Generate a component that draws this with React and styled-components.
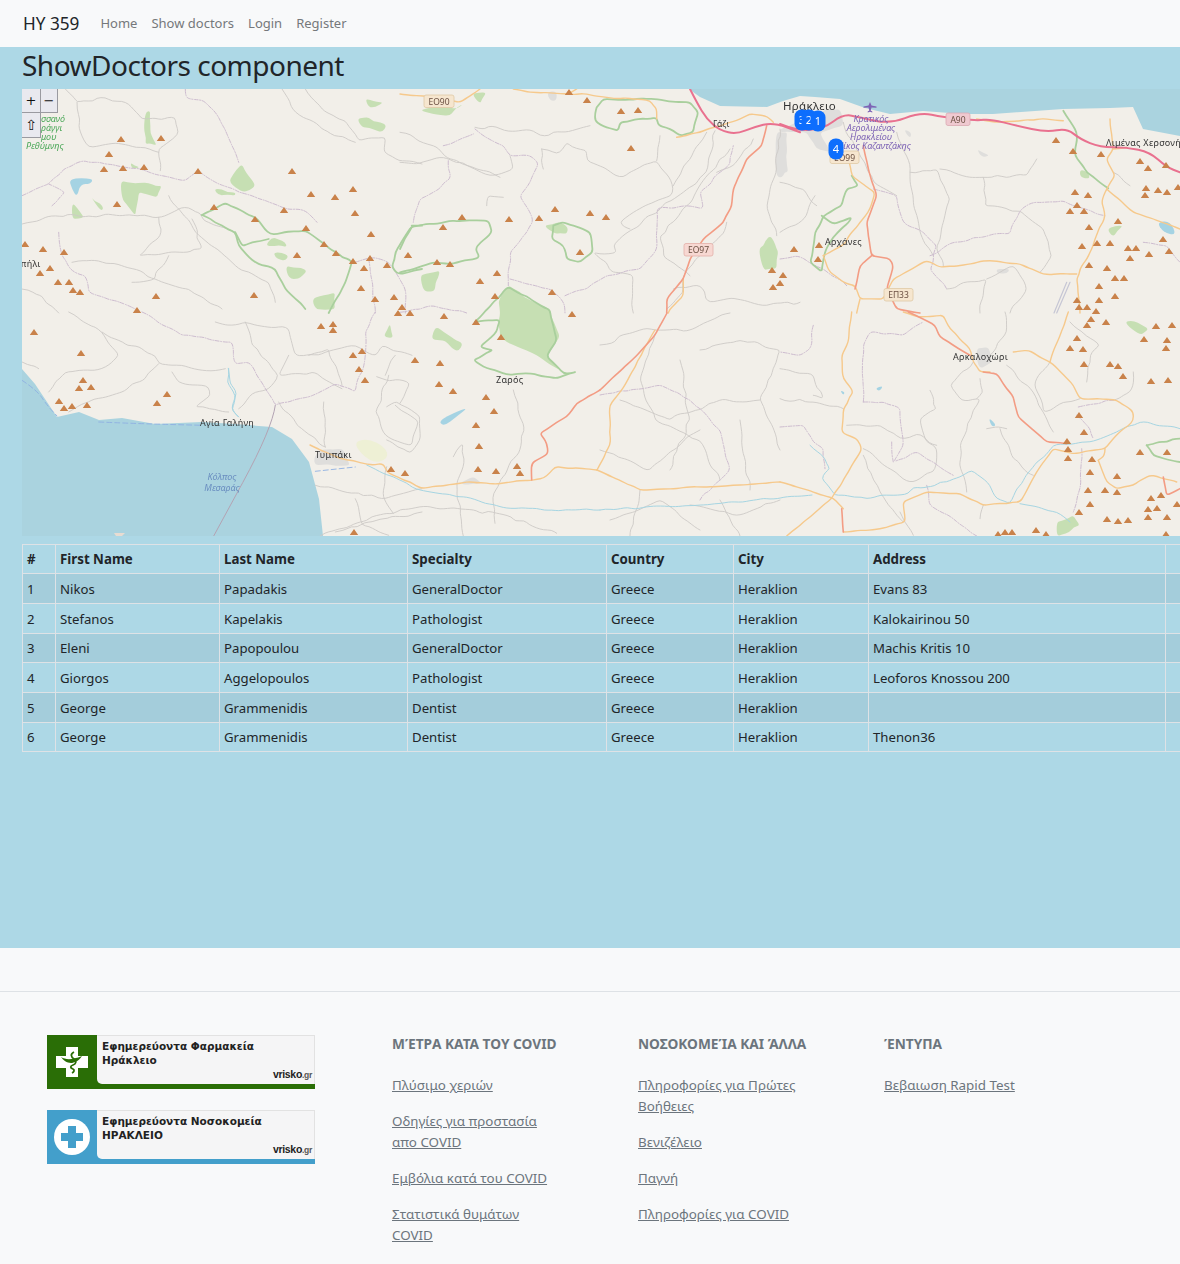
import React from "react";
import styled, { createGlobalStyle } from "styled-components";

const GlobalStyle = createGlobalStyle`
  html, body {
    margin: 0;
    padding: 0;
    overflow-x: hidden;
    background: #f8f9fa;
    font-family: "Noto Sans", "Open Sans", sans-serif;
    font-size: 14px;
    color: #212529;
  }
`;

// Navbar
const Navbar = styled.nav`
  display: flex;
  align-items: center;
  height: 47px;
  padding-left: 23px;
  background: #f8f9fa;
`;

const Brand = styled.a`
  font-size: 17.2px;
  color: #212529;
  margin: -1px 21px 0 0;
`;

const NavLinks = styled.div`
  display: flex;
  gap: 14px;
`;

const NavLink = styled.a`
  margin-top: -2px;
  font-size: 13px;
  color: #75787b;
`;

// Main blue area
const Main = styled.main`
  height: 901px;
  padding: 0 0 0 22px;
  background: #add8e6;
  overflow: hidden;
`;

const Title = styled.h1`
  margin: 0;
  height: 42px;
  font-size: 28px;
  font-weight: 400;
  line-height: 37px;
  letter-spacing: -0.5px;
`;

const MapBox = styled.div`
  position: relative;
  height: 447px;
  margin-bottom: 8px;
  overflow: hidden;
`;

const MapSvg = styled.svg`
  display: block;
  width: 1158px;
  height: 447px;
  filter: blur(0.35px);
`;

const ControlRow = styled.div`
  position: absolute;
  top: 0;
  left: 0;
  display: grid;
  grid-template-columns: 19px 17px;
  grid-template-rows: 24px 25px;
`;

const MapButton = styled.button`
  padding: 0;
  border: 1px solid #9a9aa0;
  border-width: 0 1px 1px 0;
  background: #e9e9ef;
  color: #111;
  font-family: "DejaVu Sans", sans-serif;
  font-size: ${(p) => p.$size || 13}px;
  line-height: 1;
`;

// Table
const Table = styled.table`
  width: 1203px;
  table-layout: fixed;
  border-collapse: collapse;
  color: #212529;
`;

const HeadCell = styled.th`
  height: 29px;
  padding: 0 4px;
  box-sizing: border-box;
  border: 1px solid #dee2e6;
  font-size: 13.3px;
  font-weight: 700;
  text-align: left;
`;

const Row = styled.tr`
  background: ${(p) => (p.$striped ? "#a4cddb" : "transparent")};
`;

const Cell = styled.td`
  height: ${(p) => p.$height}px;
  padding: 0 4px;
  box-sizing: border-box;
  border: 1px solid #dee2e6;
  font-size: 13.2px;
`;

// Footer
const Footer = styled.footer`
  background: #f8f9fa;
  padding-top: 43px;
`;

const FooterBody = styled.div`
  display: grid;
  grid-template-columns: 345px 246px 246px 246px;
  height: 230px;
  padding: 43px 0 0 47px;
  border-top: 1px solid #dee2e6;
  overflow: hidden;
`;

const BannerStack = styled.div`
  display: flex;
  flex-direction: column;
  gap: 21px;
`;

const Banner = styled.div`
  display: flex;
  width: 268px;
  height: 54px;
  background: ${(p) => p.$color};
`;

const BannerIcon = styled.div`
  display: flex;
  align-items: center;
  justify-content: center;
  width: 50px;
  flex: none;
`;

const BannerPanel = styled.div`
  position: relative;
  flex: 1;
  height: 49px;
  box-sizing: border-box;
  padding: 3px 0 0 5px;
  background: #f5f5f6;
  border-top: 1px solid #e2e2e2;
  border-right: 1px solid #e2e2e2;
  border-bottom-left-radius: 5px;
  font-family: "DejaVu Sans", sans-serif;
  font-size: 10.5px;
  font-weight: 700;
  line-height: 14px;
  color: #222;
`;

const Vrisko = styled.span`
  position: absolute;
  right: 2px;
  bottom: 2px;
  font-family: "Liberation Sans", sans-serif;
  font-size: 10.5px;
  font-weight: 700;
  letter-spacing: -0.3px;

  small {
    font-size: 8.5px;
    color: #555;
  }
`;

const LinkColumn = styled.div`
  display: flex;
  flex-direction: column;
  width: 168px;
`;

const ColumnTitle = styled.h5`
  margin: -2px 0 21px;
  font-size: 13.7px;
  font-weight: 700;
  line-height: 21px;
  color: #6c757d;
  white-space: nowrap;
`;

const FooterLink = styled.a`
  display: block;
  margin-bottom: 15px;
  font-size: 13.4px;
  line-height: 21px;
  color: #6c757d;
  text-decoration: underline;
`;

// zoomed crop coords -> page coords
const tile = (ox, oy) => (pts) =>
  pts
    .split(" ")
    .map((p) => {
      const [x, y] = p.split(",").map(Number);
      return `${(ox + x / 3).toFixed(1)},${(oy + y / 3).toFixed(1)}`;
    })
    .join(" ");

const A = tile(22, 89);
const B = tile(400, 89);
const C = tile(780, 89);
const D = tile(22, 312);
const E = tile(780, 312);
const F = tile(180, 280);

// round the corners of a point list so roads and woods don't look like polygons
const smooth = (pts, closed) => {
  const p = pts.split(" ").map((s) => s.split(",").map(Number));
  const mid = (a, b) => [(a[0] + b[0]) / 2, (a[1] + b[1]) / 2];
  if (closed) {
    const start = mid(p[p.length - 1], p[0]);
    let d = `M${start[0]} ${start[1]}`;
    p.forEach((q, i) => {
      const m = mid(q, p[(i + 1) % p.length]);
      d += `Q${q[0]} ${q[1]} ${m[0]} ${m[1]}`;
    });
    return d + "Z";
  }
  let d = `M${p[0][0]} ${p[0][1]}`;
  for (let i = 1; i < p.length - 1; i++) {
    const m = mid(p[i], p[i + 1]);
    d += `Q${p[i][0]} ${p[i][1]} ${m[0]} ${m[1]}`;
  }
  const last = p[p.length - 1];
  return d + `L${last[0]} ${last[1]}`;
};

// small fixed wobble, real country roads are never this clean
const wiggle = (pts, amount) => {
  const p = pts.split(" ").map((s) => s.split(",").map(Number));
  const out = [];
  p.forEach((q, i) => {
    out.push(q.join(","));
    const next = p[i + 1];
    if (!next) return;
    const steps = Math.max(1, Math.round(Math.hypot(next[0] - q[0], next[1] - q[1]) / 7));
    for (let s = 1; s < steps; s++) {
      const t = s / steps;
      const n = Math.sin((q[0] + s) * 12.9898 + (q[1] + s) * 78.233) * 43758.5453;
      const a = (n - Math.floor(n) - 0.5) * 2 * amount;
      const b = (n * 7 - Math.floor(n * 7) - 0.5) * 2 * amount;
      out.push(`${(q[0] + (next[0] - q[0]) * t + a).toFixed(1)},${(q[1] + (next[1] - q[1]) * t + b).toFixed(1)}`);
    }
  });
  return out.join(" ");
};

const greyLines = [
  A("130,0 165,40 250,25 320,45 360,90 460,85 470,130 410,180 415,245"),
  A("165,40 170,110 200,175 260,165 300,165 370,175 410,190"),
  A("850,0 900,60 970,95 1010,155 1090,145 1085,190 1130,215 1200,225"),
  A("780,0 820,70 900,120 1000,160"),
  A("0,405 100,380 200,380 300,380 410,385 500,355 560,400 640,430"),
  A("410,385 415,440 350,500 440,490 540,480 510,390"),
  A("440,320 460,350 520,430 640,530 700,560 740,580 760,640"),
  A("150,520 230,515 300,530 400,570 500,600 600,660"),
  A("440,500 410,540 400,570 330,580"),
  A("0,600 60,620 110,672"),
  B("0,130 100,170 150,210 230,240 300,265"),
  B("0,220 50,225 130,205 225,240 270,260 340,240 330,200"),
  B("225,115 400,125 420,140 550,115 570,110"),
  B("425,180 470,195 500,160 560,185 560,215 670,265 720,235 770,215 800,255 820,300 800,325 700,370 660,400 690,420"),
  B("430,240 425,180"),
  B("780,140 770,215"),
  B("920,130 880,190 850,230 820,290"),
  B("945,125 920,250 850,310 700,420 640,470 650,490 580,490 620,520 640,550 700,560 700,672"),
  B("990,180 930,250 820,400 780,440 790,500 870,560"),
  B("1060,150 1000,230 950,250"),
  B("1140,120 1130,240 1110,300 1100,350 1130,440"),
  B("820,600 900,590 930,640 1010,630 1100,650 1200,640"),
  B("980,400 975,430 900,500 850,560 850,610 800,660"),
  B("260,350 260,320 310,325"),
  C("390,250 470,240 510,330 490,400 470,470 490,530"),
  C("350,130 380,200 390,250 400,340 420,430 460,500"),
  C("610,265 615,350 720,365 790,420 815,500 780,550"),
  C("480,240 570,265 610,265 740,260 770,210"),
  C("0,280 70,300 110,350"),
  C("0,430 80,380 105,320"),
  C("1000,250 1050,290"),
  C("620,570 700,530 740,600 690,672"),
  C("500,600 550,580 620,570 600,672"),
  C("190,100 280,280 350,320"),
  E("580,150 510,220 545,265 600,260 540,400 545,480 560,540"),
  E("600,200 610,240 590,260"),
  E("630,130 680,60 675,0"),
  E("680,160 760,240 790,300 820,360"),
  E("810,150 765,210 790,300 850,270 900,260"),
  E("450,235 470,290 420,320 440,390 470,410 460,480 390,510 300,450 250,410"),
  E("200,340 300,340 360,380 410,365 470,400"),
  E("660,350 700,440 760,490"),
  E("0,260 100,270 190,290"),
  E("0,170 100,190 130,260 100,250"),
  E("620,350 680,350"),
  E("360,600 400,670"),
  E("250,430 300,540 370,630"),
  E("600,620 610,580"),
  E("870,30 960,100 930,130 920,210"),
  E("1060,180 1050,240 1000,265"),
  D("140,0 240,60 290,130 240,170 170,175 130,180 80,240"),
  D("240,60 400,130 410,155 540,175 610,170"),
  D("410,155 370,200 300,240 200,270 140,300"),
  D("0,150 50,170"),
  D("450,180 470,210 560,225 565,250 520,285 620,300"),
  D("670,30 690,100 770,190 740,230 700,240 650,290"),
  D("580,30 630,40 670,30 800,50 820,130 890,130 1000,100 1060,130 1080,100 1170,130"),
  D("800,130 770,190 870,180 960,230"),
  D("860,130 920,110 960,220"),
  D("770,270 825,340 910,405"),
  D("905,270 910,405"),
  D("1090,190 1120,130"),
  D("1100,190 1060,300 1090,370 1170,400 1190,330 1120,280"),
  D("880,520 1090,560 1200,530"),
  D("1000,560 1020,640 1100,670"),
  D("940,660 1050,630 1200,600"),
  F("820,530 850,490 850,560 830,610 840,700 850,768"),
  F("1000,330 1030,430 1020,510 940,640 945,730"),
  F("620,380 650,365 720,410 720,480 690,520 620,480"),
  F("590,290 690,310 660,370"),
  F("420,768 620,700 720,680 950,700 1130,760"),
  F("620,560 610,650 640,700"),
  // middle south part, read off the full screenshot
  "655,335 640,380 655,420 700,440 720,480",
  "700,350 740,340 780,350 760,400 780,450",
  "620,400 670,420 720,400 760,400",
  "600,450 650,470 700,430",
  "610,520 660,500 700,530",
  "720,500 740,536",
  "640,490 630,536",
  "680,360 690,420 670,470",
  "740,420 750,490",
  "600,345 640,330 690,330 730,313",
  "780,500 740,515 690,505",
];

const adminLines = [
  A("0,320 80,285 125,240 185,215 250,225 310,235 370,245 420,260 490,275 530,245 590,285 690,320 780,355 850,365 885,400"),
  A("490,0 490,25 545,35 590,85 640,190 650,220"),
  A("1000,520 1050,505 1100,520 1150,600 1150,672"),
  A("1040,510 1060,672"),
  A("90,350 130,310 80,285"),
  A("110,430 120,500 150,545 190,560 200,610 280,635 340,660"),
  B("225,120 250,140 310,170 330,200 390,200 415,225 390,280 360,320 390,370 400,395 380,430 330,490 325,590"),
  B("130,170 220,135"),
  B("145,215 150,270 100,310 60,330 40,400"),
  B("330,570 450,600 490,640 495,672"),
  B("495,620 560,600 620,560 720,540 770,480 770,360 860,350 910,360 900,310 990,225 1000,170"),
  B("0,670 100,650 200,672"),
  C("450,500 520,460 640,435 690,435 720,365 760,340 850,335 950,375 975,380"),
  C("280,300 350,320 370,400 430,430 470,470 450,540 500,600"),
  C("0,510 50,500 130,540 200,590"),
  C("1090,460 1160,470 1200,520"),
  E("250,270 250,100 270,60 370,70 430,30"),
  E("250,270 310,270 360,290 370,400 340,450 410,420 460,450 520,490"),
  E("335,390 340,450"),
  E("0,345 70,340 100,390 130,410 135,470"),
  E("100,40 90,110 60,130 0,120"),
  E("895,285 1000,265"),
  E("890,310 930,350 940,380"),
  E("905,410 900,530 880,600"),
  E("440,520 450,580 520,620 590,672"),
  D("360,0 480,70 630,90 640,155 680,150 730,230 760,280 860,255 940,215 1000,240 1030,130 1030,60 1060,0"),
  "600,395 660,385 690,400 720,430 730,470 700,500",
];

const parkLines = [
  A("540,378 610,342 700,385 745,435 850,425 900,460 960,505 990,517 960,600 920,672"),
  A("540,378 640,430 650,470 700,520 760,540 790,600 850,660"),
  A("640,430 660,470 690,460 740,450"),
  A("1200,410 1170,410 1120,490 1110,530 1130,555 1200,540"),
  B("590,55 610,30 740,30 870,40 895,70 880,130 840,140 820,125 775,110 770,85 660,100 655,125 620,115 585,95 590,55"),
  B("35,410 100,405 150,395 265,395 275,430 225,480 240,505 150,525 100,520 20,545 0,550"),
  B("0,480 35,415"),
  B("460,410 490,400 570,430 578,490 540,520 500,510 490,470 455,450 460,410"),
  F("885,125 985,20 1110,90 1130,180 1100,230 1150,280 1190,275 1130,295 1040,280 990,285 920,265 880,240 940,210 900,200 950,155 960,120 890,125"),
  C("215,260 235,290 200,300 185,350 130,380 105,430 90,520 125,548 135,490 150,460 215,385 160,405 125,380"),
  C("850,65 890,130 885,200 920,250 985,298"),
  E("1100,400 1120,430 1200,450"),
  E("1100,400 1200,380"),
];

const forests = [
  A("295,275 420,290 405,325 350,310 340,380 300,330"),
  A("575,300 640,310 640,320 590,320"),
  A("620,280 660,225 700,290 660,310"),
  A("1005,90 1040,85 1095,110 1080,130 1020,115"),
  A("1030,30 1085,40 1060,55 1040,55"),
  A("755,490 800,500 790,515 760,505"),
  A("790,530 855,545 830,570 800,570"),
  A("870,630 940,610 940,660 880,660"),
  A("750,445 790,460 795,475 730,470"),
  A("325,220 355,235 330,240"),
  A("205,320 245,360 235,365"),
  A("150,340 185,385 150,390"),
  A("370,70 385,65 385,130 405,170 370,165 365,120"),
  B("430,410 480,398 505,415 500,435 465,435"),
  B("1075,480 1110,440 1135,490 1130,540 1090,545"),
  B("60,560 120,545 105,605 70,605"),
  B("60,65 120,55 170,60 190,45 150,80 100,75"),
  B("215,15 260,10 240,45"),
  F("985,15 1050,60 1110,90 1140,170 1100,230 1140,270 1060,220 1000,195 960,170 955,60"),
  F("610,170 630,130 640,175"),
  F("755,180 770,140 790,155 850,190 835,215 790,180"),
  E("1030,30 1060,25 1105,50 1080,70"),
  E("830,630 880,610 900,640 830,672"),
  C("980,420 1030,410 1000,445"),
  C("900,240 925,250 930,270 900,265"),
];

const waters = [
  A("140,268 215,268 205,285 175,285 165,325 150,300"),
  C("1130,400 1170,395 1190,440 1150,430"),
  E("285,230 310,220 300,238"),
  E("625,315 650,340 635,345"),
  E("180,235 195,240 190,250"),
  F("775,420 870,378 830,410 790,440"),
];

const cityBlobs = [
  C("0,120 60,100 140,60 180,60 190,110 120,130 150,190 110,180 80,130 0,130"),
  C("-10,130 22,130 18,250 0,270 -15,250"),
  B("1125,130 1150,130 1165,250 1130,250"),
  B("440,10 470,5 470,35 450,35"),
  C("370,120 395,130 390,150"),
  C("590,180 630,200 605,205"),
  C("650,540 690,540 680,555 650,552"),
  E("590,110 625,105 635,150 600,170 590,145"),
  F("840,610 880,590 905,610 860,615"),
  D("875,440 890,415 960,410 985,460 880,460"),
];

const motorway = [
  B("870,0 890,40 920,90 960,125 1010,135 1060,115 1120,100 1200,130"),
  C("0,105 50,125 130,120 190,75 240,85 330,105 420,70 490,85 590,95 630,90 710,110 800,130 860,118 900,150 960,175 1040,175 1110,190 1160,235 1200,250"),
];

const trunks = [
  B("1100,110 1085,170 1040,210 1000,300 995,350 970,400 910,450 870,510 850,570 800,630 800,672"),
  C("250,170 265,240 290,320 260,400 275,500 330,510 340,530 320,600 350,660 420,672"),
  C("275,500 240,530 225,600"),
  E("385,0 465,40 480,75 570,130"),
  E("610,180 650,185 680,230 700,255 715,315 800,390 860,395"),
  E("185,590 190,660"),
  E("1150,495 1160,550 1200,530"),
  F("1055,600 1055,550 1105,520 1100,490 1080,460 1160,410 1190,370 1260,330"),
  "667,313 655,335 640,352 600,390",
];

const secondaries = [
  B("0,15 60,20 180,40 210,20 240,0"),
  B("340,0 400,10 500,15 530,0"),
  B("500,15 560,15 620,25 700,30 750,35 770,60 770,90"),
  B("830,145 900,130 940,115 1010,95 1050,75 1095,80 1120,100"),
  B("850,570 850,620 810,660 805,672"),
  C("590,90 650,100 800,90 850,95"),
  C("990,90 1000,180 980,210 1005,260 980,300 965,340 975,380 945,450 930,490 900,540 890,570 900,672"),
  C("980,300 1060,370 1120,390 1200,420"),
  C("1000,180 1040,175"),
  C("205,210 215,260 285,310 270,360 240,400 215,430 195,465 150,490 130,500"),
  C("130,500 150,550 190,580 225,590 240,630 310,630 340,570 440,515 480,535 540,530 620,515 720,525 790,555 890,555"),
  C("240,630 230,672"),
  E("215,0 205,90 185,130 190,200 220,240 190,290 185,360 235,385 245,410 205,480 155,560 20,672"),
  E("0,510 100,540 160,558 190,590"),
  E("370,0 410,15 490,10 510,50 570,110 580,150 600,180 630,180"),
  E("700,120 745,115 810,150 880,220 900,260 950,260 1010,265 1060,300 1060,325 1000,380 975,410 880,425 820,410 770,480 720,570 610,580 540,545 440,540 370,570 375,630 300,650 190,660"),
  E("865,0 810,150"),
  E("955,445 980,510 1010,530 1060,520 1110,490 1190,510"),
  E("975,410 975,430 955,445"),
  F("390,495 480,535 580,555 610,550 620,575 725,625 830,612 870,605 950,612 1090,595 1125,560 1250,570"),
  "655,330 625,385 610,405 610,445 597,470",
  "597,470 640,490 700,487 780,482",
];

const rivers = [
  E("90,400 135,440 150,470 125,500 165,550 260,560 300,550 385,545 400,525 440,525 540,495 575,475 630,520 650,560 690,575 710,530 770,450 820,400 930,390 1010,360 1080,330 1200,350"),
  E("720,575 830,600 870,630"),
  D("620,170 615,210 640,250 630,290 650,315"),
  F("560,555 640,590 720,630 850,650 960,680 1115,690 1260,690"),
  F("145,265 150,310 170,340 155,385 175,410"),
  "600,510 700,505 812,495",
];

const peaks =
  "121,139 161,138 109,154 104,169 123,168 144,167 198,171 292,171 117,204 311,194 335,197 353,189 355,213 214,207 284,210 255,219 306,228 371,234 324,244 336,253 297,255 353,261 370,258 387,265 408,255 364,268 361,288 375,299 394,297 402,307 25,244 43,249 64,252 50,268 40,273 58,282 69,282 73,290 80,292 156,296 254,295 137,310 569,92 587,100 621,111 638,110 631,148 555,209 590,213 606,217 539,218 462,217 509,219 443,227 437,262 450,264 580,252 497,273 480,281 495,296 552,292 794,249 772,270 783,275 780,283 773,287 1056,140 1073,151 1101,154 1140,161 1148,168 1166,165 1075,192 1088,195 1146,188 1145,195 1158,190 1167,192 1178,187 1077,205 1070,211 1084,211 1118,221 1089,227 1163,239 1169,251 1082,246 1097,243 1110,243 1128,248 1136,248 1149,254 1130,258 1089,265 1107,268 1115,278 1124,278 1099,286 1115,296 1099,300 1077,300 1079,307 1087,307 1096,311 819,245 818,259 1091,319 1087,325 1106,322 1077,338 1070,348 1083,349 1084,364 1110,364 1118,366 1123,376 1151,381 1168,380 1156,326 1172,325 1144,339 1167,340 1166,348 1079,415 1084,432 1067,441 1068,449 1068,458 1092,459 1090,472 1140,452 1167,452 1117,476 1088,490 1105,490 1117,492 1151,498 1161,495 1148,509 1157,508 1177,504 1148,517 1167,517 1090,504 1079,512 1107,519 1118,521 1128,520 1036,530 1005,532 1012,532 998,534 1046,534 1166,534 34,332 81,353 83,380 79,388 91,387 59,401 64,408 72,406 87,405 167,394 157,403 321,326 333,324 333,330 353,355 362,351 359,369 365,380 415,360 354,532 398,313 410,313 444,316 476,322 572,314 501,337 440,363 439,384 453,391 486,397 494,411 476,425 479,446 478,469 496,471 517,466 520,473 391,469 405,473";

const peakPath = peaks
  .split(" ")
  .map((p) => {
    const [x, y] = p.split(",").map(Number);
    return `M${x - 4.2} ${y + 3}L${x} ${y - 3}L${x + 4.2} ${y + 3}Z`;
  })
  .join("");

const seaNorth =
  "M690 89 L693 92 L700 97 L720 106 L767 107 L783 101 L800 96 L815 97 L840 99 L865 108 L890 114 L923 111 L963 114 L993 114 L1063 109 L1110 108 L1133 107 L1143 129 L1180 136 L1180 89 Z";
const seaSouth =
  "M22 369 L35 384 L45 399 L57 417 L79 412 L99 420 L122 418 L155 424 L202 422 L235 424 L272 427 L292 439 L309 462 L319 499 L323 536 L22 536 Z";

const roadBadges = [
  { x: 424, y: 95, w: 30, label: "ΕΟ90", bg: "#f6e6cf", line: "#e0c9a4" },
  { x: 684, y: 243.5, w: 29, label: "ΕΟ97", bg: "#f7d8d2", line: "#e3b0a8" },
  { x: 946, y: 113, w: 24, label: "A90", bg: "#efc9d0", line: "#dba9b3" },
  { x: 830, y: 151, w: 29, label: "ΕΟ99", bg: "#f6e6cf", line: "#e0c9a4" },
  { x: 884, y: 288.5, w: 29, label: "ΕΠ33", bg: "#f6e6cf", line: "#e0c9a4" },
];

const placeLabels = [
  { x: 783, y: 110, size: 11.5, text: "Ηράκλειο" },
  { x: 713, y: 127, size: 8.5, text: "Γάζι" },
  { x: 825, y: 245, size: 9, text: "Αρχάνες" },
  { x: 953, y: 360, size: 9, text: "Αρκαλοχώρι" },
  { x: 496, y: 383, size: 9, text: "Ζαρός" },
  { x: 200, y: 426, size: 9, text: "Αγία Γαλήνη" },
  { x: 315, y: 458, size: 9, text: "Τυμπάκι" },
  { x: 1106, y: 146, size: 9, text: "Λιμένας Χερσονήσου" },
  { x: 15, y: 267, size: 9, text: "Σπήλι" },
];

const airportLabels = [
  { x: 871, y: 122, text: "Κρατικός" },
  { x: 871, y: 131, text: "Αερολιμένας" },
  { x: 871, y: 140, text: "Ηρακλείου" },
  { x: 874, y: 149, text: "Νίκος Καζαντζάκης" },
];

const gorgeLabels = [
  { y: 122, text: "σσανό" },
  { y: 131, text: "ράγγι" },
  { y: 140, text: "μου" },
  { y: 149, text: "Ρεθύμνης" },
];

const Lines = ({ items, shake, ...rest }) => (
  <g fill="none" strokeLinejoin="round" strokeLinecap="round" {...rest}>
    {items.map((pts, i) => (
      <path key={i} d={smooth(shake ? wiggle(pts, shake) : pts)} />
    ))}
  </g>
);

const Areas = ({ items, fill, shake }) => (
  <g fill={fill}>
    {items.map((pts, i) => (
      <path key={i} d={smooth(shake ? wiggle(pts, shake) : pts, true)} />
    ))}
  </g>
);

const Pin = ({ x, y, n }) => (
  <g>
    <rect x={x - 7.5} y={y - 10.5} width="15" height="21" rx="7" fill="#0d6efd" />
    <text x={x} y={y + 4} textAnchor="middle" fontSize="11" fill="#fff">
      {n}
    </text>
  </g>
);

const CreteMap = () => (
  <MapSvg viewBox="22 89 1158 447" fontFamily="Noto Sans, sans-serif">
    <rect x="22" y="89" width="1158" height="447" fill="#f2efe9" />
    <path d={seaNorth} fill="#aad3df" />
    <path d={seaSouth} fill="#aad3df" />
    <Areas items={cityBlobs} fill="#dfdedc" shake={1} />
    <path d={smooth(D("990,395 1035,378 1090,405 1100,440 1050,455"), true)} fill="#eef0d5" />
    <Areas items={forests} fill="#c6dfb3" shake={1.6} />
    <Areas items={waters} fill="#a5d3e3" />
    <Lines items={greyLines} stroke="#cdcac6" strokeWidth="0.9" shake={2} />
    <Lines items={adminLines} stroke="#cdbccf" strokeWidth="1" strokeDasharray="4 1.5 1 1.5" shake={1.2} />
    <Lines items={parkLines} stroke="#a9cf9d" strokeWidth="1.8" shake={1} />
    <Lines items={rivers} stroke="#a6d5e2" strokeWidth="1" shake={1.2} />
    <Lines items={[D("880,478 1000,465"), D("0,205 45,235 75,280 105,312"), D("230,330 350,335 540,340")]} stroke="#8fb0e2" strokeWidth="0.9" strokeDasharray="5 3" />
    <Lines items={[D("760,280 750,350 575,672")]} stroke="#b3a3b3" strokeWidth="1" />
    <Lines items={[C("870,580 830,672"), C("860,580 822,672")]} stroke="#c6c6d4" strokeWidth="1.2" />
    <Lines items={secondaries} stroke="#f6c98c" strokeWidth="1.4" shake={0.7} />
    <Lines items={trunks} stroke="#f39c84" strokeWidth="1.6" shake={0.4} />
    <Lines items={motorway} stroke="#e9718f" strokeWidth="2" />
    <path d={peakPath} fill="#c9824a" />
    <polygon points="114,533 125,533 122,536 116,536" fill="#e8dcd2" />

    {roadBadges.map((b) => (
      <g key={b.label}>
        <rect x={b.x} y={b.y} width={b.w} height="12.5" rx="2" fill={b.bg} stroke={b.line} strokeWidth="0.8" />
        <text x={b.x + b.w / 2} y={b.y + 9.7} textAnchor="middle" fontSize="8.5" fill="#6b5042">
          {b.label}
        </text>
      </g>
    ))}

    {placeLabels.map((l) => (
      <text key={l.text} x={l.x} y={l.y} fontSize={l.size} fill="#333" letterSpacing="0.3">
        {l.text}
      </text>
    ))}

    <g fontSize="9" fontStyle="italic" fill="#7d63b5" textAnchor="middle">
      {airportLabels.map((l) => (
        <text key={l.text} x={l.x} y={l.y}>
          {l.text}
        </text>
      ))}
    </g>
    <path d="M870 102l1.5 3.5 5 1v1.2l-5-.3-.8 3 1.6 1.2v.8l-2.3-.7-2.3.7v-.8l1.6-1.2-.8-3-5 .3v-1.2l5-1z" fill="#7d63b5" />

    <g fontSize="9" fontStyle="italic" fill="#4da85a">
      {gorgeLabels.map((l) => (
        <text key={l.text} x={l.text === "Ρεθύμνης" ? 26 : 41} y={l.y}>
          {l.text}
        </text>
      ))}
    </g>

    <g fontSize="9" fontStyle="italic" fill="#6a8ec0" textAnchor="middle">
      <text x="222" y="480">Κόλπος</text>
      <text x="222" y="491">Μεσαράς</text>
    </g>

    <Pin x={802} y={120} n="3" />
    <Pin x={809} y={120} n="2" />
    <Pin x={818} y={121} n="1" />
    <Pin x={836} y={149} n="4" />
  </MapSvg>
);

const PharmacyIcon = () => (
  <svg width="32" height="32" viewBox="0 0 32 32">
    <path d="M10 1h12v9h10v12H22v9H10v-9H0V10h10z" fill="#fff" />
    <path d="M5 11c5 3 11 3 21-1-3 5-8 7-11 7-4 0-8-3-10-6z" fill="#2a6e06" />
    <path d="M18 6c-4 2-3 5 0 7 3 2 2 5-1 6-3 1-3 3 0 4 2 1 1 3-1 4" fill="none" stroke="#2a6e06" strokeWidth="1.8" />
  </svg>
);

const HospitalIcon = () => (
  <svg width="36" height="36" viewBox="0 0 36 36">
    <circle cx="18" cy="18" r="18" fill="#fff" />
    <path d="M14 7h8v7h7v8h-7v7h-8v-7H7v-8h7z" fill="#439fcb" />
  </svg>
);

const VriskoMark = () => (
  <Vrisko>
    vrisko<small>.gr</small>
  </Vrisko>
);

const headers = ["#", "First Name", "Last Name", "Specialty", "Country", "City", "Address", ""];
const colWidths = [33, 164, 188, 199, 127, 135, 297, 60];
const rowHeights = [30, 30, 29, 30, 30, 29];

const doctors = [
  [1, "Nikos", "Papadakis", "GeneralDoctor", "Greece", "Heraklion", "Evans 83"],
  [2, "Stefanos", "Kapelakis", "Pathologist", "Greece", "Heraklion", "Kalokairinou 50"],
  [3, "Eleni", "Papopoulou", "GeneralDoctor", "Greece", "Heraklion", "Machis Kritis 10"],
  [4, "Giorgos", "Aggelopoulos", "Pathologist", "Greece", "Heraklion", "Leoforos Knossou 200"],
  [5, "George", "Grammenidis", "Dentist", "Greece", "Heraklion", ""],
  [6, "George", "Grammenidis", "Dentist", "Greece", "Heraklion", "Thenon36"],
];

const footerColumns = [
  {
    title: "ΜΈΤΡΑ ΚΑΤΑ ΤΟΥ COVID",
    links: ["Πλύσιμο χεριών", "Οδηγίες για προστασία απο COVID", "Εμβόλια κατά του COVID", "Στατιστικά θυμάτων COVID"],
  },
  {
    title: "ΝΟΣΟΚΟΜΕΊΑ ΚΑΙ ΆΛΛΑ",
    links: ["Πληροφορίες για Πρώτες Βοήθειες", "Βενιζέλειο", "Παγνή", "Πληροφορίες για COVID"],
  },
  {
    title: "ΈΝΤΥΠΑ",
    links: ["Βεβαιωση Rapid Test"],
  },
];

function App() {
  return (
    <>
      <GlobalStyle />
      <Navbar>
        <Brand>HY 359</Brand>
        <NavLinks>
          <NavLink>Home</NavLink>
          <NavLink>Show doctors</NavLink>
          <NavLink>Login</NavLink>
          <NavLink>Register</NavLink>
        </NavLinks>
      </Navbar>

      <Main>
        <Title>ShowDoctors component</Title>
        <MapBox>
          <CreteMap />
          <ControlRow>
            <MapButton>+</MapButton>
            <MapButton>−</MapButton>
            <MapButton $size={14}>⇧</MapButton>
          </ControlRow>
        </MapBox>
        <Table>
          <colgroup>
            {colWidths.map((w, i) => (
              <col key={i} style={{ width: w }} />
            ))}
          </colgroup>
          <thead>
            <tr>
              {headers.map((h, i) => (
                <HeadCell key={i}>{h}</HeadCell>
              ))}
            </tr>
          </thead>
          <tbody>
            {doctors.map((d, i) => (
              <Row key={d[0]} $striped={i % 2 === 0}>
                {d.map((value, j) => (
                  <Cell key={j} $height={rowHeights[i]}>
                    {value}
                  </Cell>
                ))}
                <Cell $height={rowHeights[i]} />
              </Row>
            ))}
          </tbody>
        </Table>
      </Main>

      <Footer>
        <FooterBody>
          <BannerStack>
            <Banner $color="#2a6e06">
              <BannerIcon>
                <PharmacyIcon />
              </BannerIcon>
              <BannerPanel>
                Εφημερεύοντα Φαρμακεία
                <br />
                Ηράκλειο
                <VriskoMark />
              </BannerPanel>
            </Banner>
            <Banner $color="#439fcb">
              <BannerIcon>
                <HospitalIcon />
              </BannerIcon>
              <BannerPanel>
                Εφημερεύοντα Νοσοκομεία
                <br />
                ΗΡΑΚΛΕΙΟ
                <VriskoMark />
              </BannerPanel>
            </Banner>
          </BannerStack>
          {footerColumns.map((col) => (
            <LinkColumn key={col.title}>
              <ColumnTitle>{col.title}</ColumnTitle>
              {col.links.map((link) => (
                <FooterLink key={link}>{link}</FooterLink>
              ))}
            </LinkColumn>
          ))}
        </FooterBody>
      </Footer>
    </>
  );
}

export default App;
